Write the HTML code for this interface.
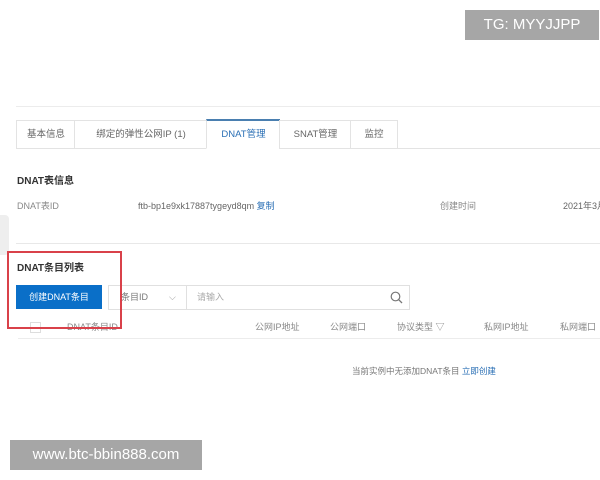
<!DOCTYPE html><html><head><meta charset="utf-8"><style>
body{margin:0;width:600px;height:480px;background:#fff;position:relative;overflow:hidden;font-family:"Liberation Sans","Noto Sans CJK SC",sans-serif;font-size:9px;color:#555}
.a{position:absolute;white-space:nowrap}
.tab{position:absolute;top:120px;height:27px;border:1px solid #e3e3e3;border-right:none;line-height:27px;text-align:center;color:#666;font-size:9.5px;background:#fff}
</style></head><body>
<div class="a" style="left:465px;top:10px;width:134px;height:30px;background:#a6a6a6;color:#fff;font-size:15px;line-height:30px;text-align:center">TG: MYYJJPP</div>
<div class="a" style="left:16px;top:106px;width:584px;height:1px;background:#ececec"></div>
<div class="a" style="left:16px;top:148px;width:584px;height:1px;background:#e3e3e3"></div>
<div class="tab" style="left:16px;width:58px">基本信息</div>
<div class="tab" style="left:74px;width:132px">绑定的弹性公网IP (1)</div>
<div class="tab" style="left:206px;width:73px;border-top:2px solid #4a7fb0;height:27px;top:119px;color:#2a6fb5;border-bottom:1px solid #fff">DNAT管理</div>
<div class="tab" style="left:279px;width:71px">SNAT管理</div>
<div class="tab" style="left:350px;width:46px;border-right:1px solid #e3e3e3">监控</div>
<div class="a" style="left:17px;top:172px;font-weight:bold;color:#333;font-size:10px">DNAT表信息</div>
<div class="a" style="left:17px;top:199px;color:#888">DNAT表ID</div>
<div class="a" style="left:138px;top:199px;color:#666">ftb-bp1e9xk17887tygeyd8qm <span style="color:#2a6fb5">复制</span></div>
<div class="a" style="left:440px;top:199px;color:#888">创建时间</div>
<div class="a" style="left:563px;top:199px;color:#666">2021年3月</div>
<div class="a" style="left:0;top:215px;width:9px;height:40px;background:#eee;border-radius:0 4px 4px 0"></div>
<div class="a" style="left:16px;top:243px;width:584px;height:1px;background:#e8e8e8"></div>
<div class="a" style="left:17px;top:259px;font-weight:bold;color:#333;font-size:10px">DNAT条目列表</div>
<div class="a" style="left:16px;top:285px;width:86px;height:24px;background:#0a6fc8;color:#fff;line-height:24px;text-align:center">创建DNAT条目</div>
<div class="a" style="left:108px;top:285px;width:77px;height:23px;border:1px solid #e0e0e0;line-height:23px;color:#777"><span style="margin-left:12px">条目ID</span><span style="position:absolute;left:60px;color:#999">⌵</span></div>
<div class="a" style="left:185px;top:285px;width:224px;height:23px;border:1px solid #e0e0e0;border-left:none;line-height:23px;color:#aaa"><span style="margin-left:12px">请输入</span>
<svg style="position:absolute;right:6px;top:5px" width="13" height="13" viewBox="0 0 13 13"><circle cx="5.5" cy="5.5" r="4.3" fill="none" stroke="#777" stroke-width="1.2"/><path d="M8.6 8.6L12 12" stroke="#777" stroke-width="1.3"/></svg></div>
<div class="a" style="left:30px;top:322px;width:9px;height:9px;border:1px solid #ddd"></div>
<div class="a" style="left:67px;top:320px;color:#888">DNAT条目ID</div>
<div class="a" style="left:255px;top:320px;color:#888">公网IP地址</div>
<div class="a" style="left:330px;top:320px;color:#888">公网端口</div>
<div class="a" style="left:397px;top:320px;color:#888">协议类型 ▽</div>
<div class="a" style="left:484px;top:320px;color:#888">私网IP地址</div>
<div class="a" style="left:560px;top:320px;color:#888">私网端口</div>
<div class="a" style="left:18px;top:338px;width:582px;height:1px;background:#ececec"></div>
<div class="a" style="left:7px;top:251px;width:111px;height:74px;border:2px solid #d9414a"></div>
<div class="a" style="left:352px;top:365px;color:#777;font-size:8.5px">当前实例中无添加DNAT条目 <span style="color:#2a6fb5">立即创建</span></div>
<div class="a" style="left:10px;top:440px;width:192px;height:30px;background:#a6a6a6;color:#fff;font-size:15px;line-height:30px;text-align:center">www.btc-bbin888.com</div>
</body></html>
